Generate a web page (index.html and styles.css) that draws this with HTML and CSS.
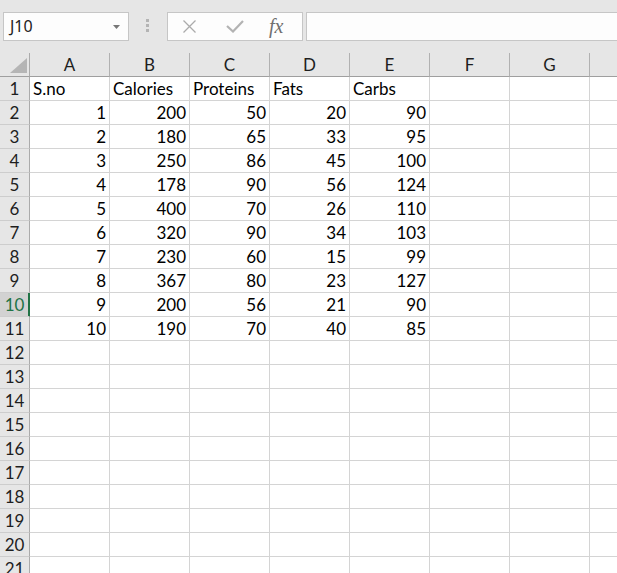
FILE: index.html
```html
<!DOCTYPE html>
<html>
<head>
<meta charset="utf-8">
<link rel="stylesheet" href="styles.css">
</head>
<body>
<div class="toolbar">
  <div class="namebox">
    <span class="nb-text">J10</span>
    <svg class="nb-arrow" width="7" height="4" viewBox="0 0 7 4"><polygon points="0,0 7,0 3.5,4" fill="#777"/></svg>
  </div>
  <div class="grip"><span></span><span></span><span></span></div>
  <div class="fbtns">
    <svg class="ic-x" width="15" height="13" viewBox="0 0 15 13"><path d="M1.5 0.5 L13.5 12.5 M13.5 0.5 L1.5 12.5" stroke="#ababab" stroke-width="1.3" fill="none"/></svg>
    <svg class="ic-check" width="18" height="13" viewBox="0 0 18 13"><path d="M1 6 L7 11.5 L17 1" stroke="#b3b3b3" stroke-width="2.2" fill="none"/></svg>
    <span class="fx">fx</span>
  </div>
  <div class="finput"></div>
</div>
<div class="sheet">
  <div class="corner"><svg width="17" height="15" viewBox="0 0 17 15"><polygon points="0,15 17,15 17,0" fill="#b5b5b5"/></svg></div>
  <div class="ch">A</div><div class="ch">B</div><div class="ch">C</div><div class="ch">D</div><div class="ch">E</div><div class="ch">F</div><div class="ch">G</div><div class="ch last"></div>

  <div class="rh">1</div><div class="c">S.no</div><div class="c">Calories</div><div class="c">Proteins</div><div class="c">Fats</div><div class="c">Carbs</div><div class="c"></div><div class="c"></div><div class="c last"></div>
  <div class="rh">2</div><div class="c n">1</div><div class="c n">200</div><div class="c n">50</div><div class="c n">20</div><div class="c n">90</div><div class="c"></div><div class="c"></div><div class="c last"></div>
  <div class="rh">3</div><div class="c n">2</div><div class="c n">180</div><div class="c n">65</div><div class="c n">33</div><div class="c n">95</div><div class="c"></div><div class="c"></div><div class="c last"></div>
  <div class="rh">4</div><div class="c n">3</div><div class="c n">250</div><div class="c n">86</div><div class="c n">45</div><div class="c n">100</div><div class="c"></div><div class="c"></div><div class="c last"></div>
  <div class="rh">5</div><div class="c n">4</div><div class="c n">178</div><div class="c n">90</div><div class="c n">56</div><div class="c n">124</div><div class="c"></div><div class="c"></div><div class="c last"></div>
  <div class="rh">6</div><div class="c n">5</div><div class="c n">400</div><div class="c n">70</div><div class="c n">26</div><div class="c n">110</div><div class="c"></div><div class="c"></div><div class="c last"></div>
  <div class="rh">7</div><div class="c n">6</div><div class="c n">320</div><div class="c n">90</div><div class="c n">34</div><div class="c n">103</div><div class="c"></div><div class="c"></div><div class="c last"></div>
  <div class="rh">8</div><div class="c n">7</div><div class="c n">230</div><div class="c n">60</div><div class="c n">15</div><div class="c n">99</div><div class="c"></div><div class="c"></div><div class="c last"></div>
  <div class="rh">9</div><div class="c n">8</div><div class="c n">367</div><div class="c n">80</div><div class="c n">23</div><div class="c n">127</div><div class="c"></div><div class="c"></div><div class="c last"></div>
  <div class="rh sel">10</div><div class="c n">9</div><div class="c n">200</div><div class="c n">56</div><div class="c n">21</div><div class="c n">90</div><div class="c"></div><div class="c"></div><div class="c last"></div>
  <div class="rh">11</div><div class="c n">10</div><div class="c n">190</div><div class="c n">70</div><div class="c n">40</div><div class="c n">85</div><div class="c"></div><div class="c"></div><div class="c last"></div>
  <div class="rh">12</div><div class="c"></div><div class="c"></div><div class="c"></div><div class="c"></div><div class="c"></div><div class="c"></div><div class="c"></div><div class="c last"></div>
  <div class="rh">13</div><div class="c"></div><div class="c"></div><div class="c"></div><div class="c"></div><div class="c"></div><div class="c"></div><div class="c"></div><div class="c last"></div>
  <div class="rh">14</div><div class="c"></div><div class="c"></div><div class="c"></div><div class="c"></div><div class="c"></div><div class="c"></div><div class="c"></div><div class="c last"></div>
  <div class="rh">15</div><div class="c"></div><div class="c"></div><div class="c"></div><div class="c"></div><div class="c"></div><div class="c"></div><div class="c"></div><div class="c last"></div>
  <div class="rh">16</div><div class="c"></div><div class="c"></div><div class="c"></div><div class="c"></div><div class="c"></div><div class="c"></div><div class="c"></div><div class="c last"></div>
  <div class="rh">17</div><div class="c"></div><div class="c"></div><div class="c"></div><div class="c"></div><div class="c"></div><div class="c"></div><div class="c"></div><div class="c last"></div>
  <div class="rh">18</div><div class="c"></div><div class="c"></div><div class="c"></div><div class="c"></div><div class="c"></div><div class="c"></div><div class="c"></div><div class="c last"></div>
  <div class="rh">19</div><div class="c"></div><div class="c"></div><div class="c"></div><div class="c"></div><div class="c"></div><div class="c"></div><div class="c"></div><div class="c last"></div>
  <div class="rh">20</div><div class="c"></div><div class="c"></div><div class="c"></div><div class="c"></div><div class="c"></div><div class="c"></div><div class="c"></div><div class="c last"></div>
  <div class="rh">21</div><div class="c"></div><div class="c"></div><div class="c"></div><div class="c"></div><div class="c"></div><div class="c"></div><div class="c"></div><div class="c last"></div>
</div>
</body>
</html>
```

FILE: styles.css
```css
html, body {
  margin: 0;
  padding: 0;
  overflow: hidden;
  background: #ffffff;
}

body {
  font-family: "Lato", "Liberation Sans", sans-serif;
  font-size: 17px;
  color: #000;
}

.toolbar {
  height: 53px;
  background: #e6e6e6;
  display: flex;
  align-items: flex-start;
  padding-top: 12px;
  box-sizing: border-box;
}

.namebox {
  margin-left: 3px;
  width: 126px;
  height: 29px;
  box-sizing: border-box;
  background: #fdfdfd;
  border: 1px solid #c6c6c6;
  display: flex;
  align-items: center;
  padding-left: 6px;
  padding-right: 8px;
}

.nb-text {
  font-family: "Noto Sans", "Liberation Sans", sans-serif;
  font-size: 16px;
  color: #222;
  flex: 1;
  line-height: 27px;
}

.nb-arrow {
  display: block;
  margin-top: 1px;
}

.grip {
  margin-left: 17px;
  margin-top: 7px;
  display: flex;
  flex-direction: column;
  gap: 2px;
}

.grip span {
  display: block;
  width: 3px;
  height: 3px;
  background: #b4b4b4;
}

.fbtns {
  margin-left: 18px;
  width: 136px;
  height: 29px;
  box-sizing: border-box;
  background: #fdfdfd;
  border: 1px solid #c6c6c6;
  display: flex;
  align-items: center;
}

.ic-x {
  display: block;
  margin-left: 14px;
}

.ic-check {
  display: block;
  margin-left: 29px;
}

.fx {
  margin-left: 25px;
  font-family: "Liberation Serif", serif;
  font-style: italic;
  font-size: 20px;
  color: #6f6f6f;
  line-height: 27px;
}

.finput {
  flex: 1;
  margin-left: 3px;
  height: 29px;
  box-sizing: border-box;
  background: #fdfdfd;
  border: 1px solid #c6c6c6;
  border-right: none;
}

.sheet {
  display: grid;
  grid-template-columns: 30px repeat(7, 80px) 1fr;
  grid-auto-rows: 24px;
}

.sheet > div {
  box-sizing: border-box;
  line-height: 23px;
  white-space: nowrap;
  overflow: hidden;
}

.corner {
  background: #e6e6e6;
  border-right: 1px solid #ababab;
  border-bottom: 1px solid #9f9f9f;
  display: flex;
  justify-content: flex-end;
  align-items: flex-end;
  padding: 0 2px 3px 0;
}

.corner svg {
  display: block;
}

.ch {
  background: #e6e6e6;
  text-align: center;
  color: #1e1e1e;
  border-right: 1px solid #b1b1b1;
  border-bottom: 1px solid #9f9f9f;
}

.rh {
  background: #e6e6e6;
  text-align: center;
  color: #1e1e1e;
  border-right: 1px solid #ababab;
  border-bottom: 1px solid #cdcdcd;
}

.rh.sel {
  background: #d2d2d2;
  color: #217346;
  border-right-color: #217346;
  box-shadow: inset -1px 0 0 #217346;
}

.c {
  padding: 0 3px;
  border-right: 1px solid #d4d4d4;
  border-bottom: 1px solid #d4d4d4;
}

.n {
  text-align: right;
}

.sheet > .last {
  border-right: none;
}
```
